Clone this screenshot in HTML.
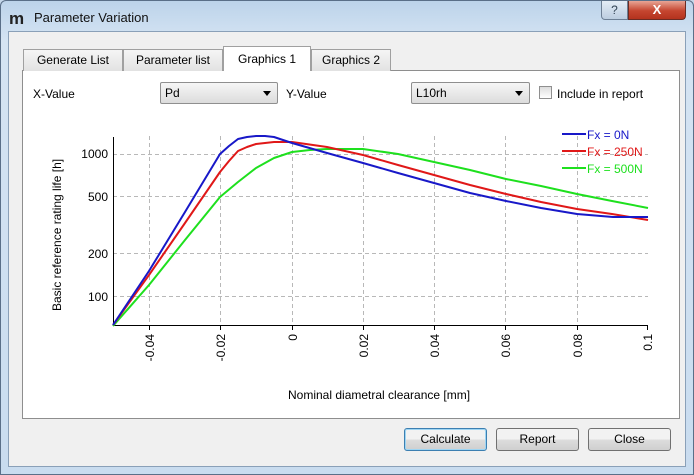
<!DOCTYPE html>
<html><head><style>
*{margin:0;padding:0;box-sizing:border-box}
body{width:694px;height:475px;overflow:hidden;font-family:"Liberation Sans",sans-serif;font-size:12px;color:#000;background:#c4d7ea}
.win{position:absolute;left:0;top:0;width:694px;height:475px;background:linear-gradient(#bcd3ea,#d5e4f3 40px,#c9dcef);border:1px solid #5a6f88;border-radius:6px 6px 0 0}
.title{position:absolute;left:33px;top:9px;font-size:13px;color:#111}
.logo{position:absolute;left:8px;top:8px;font-size:17px;font-weight:bold;color:#222;letter-spacing:-1px}
.help{position:absolute;left:600px;top:0;width:27px;height:19px;border:1px solid #6d7f95;border-top:none;border-radius:0 0 0 4px;background:linear-gradient(#e3ecf6,#bccde0);text-align:center;font-size:12px;color:#345;line-height:18px}
.close{position:absolute;left:627px;top:0;width:58px;height:19px;border:1px solid #6b2b23;border-top:none;border-radius:0 0 4px 0;background:linear-gradient(#e8a595,#c5452f 55%,#b4331e);text-align:center;color:#fff;font-weight:bold;line-height:18px;font-size:13px}
.inner{position:absolute;left:8px;top:31px;width:678px;height:436px;background:#f0f0f0;border:1px solid #8aa0b8}
.pane{position:absolute;left:22px;top:70px;width:658px;height:349px;background:#fff;border:1px solid #8e8e8e}
.tab{position:absolute;top:49px;height:22px;border:1px solid #a0a0a0;border-bottom:none;background:linear-gradient(#f5f5f5,#e2e2e2);text-align:center;line-height:21px;font-size:12px}
.tab.a{top:46px;height:25px;background:#fff;line-height:25px}
.lbl{position:absolute;top:87px;font-size:12px}
.combo{position:absolute;top:82px;height:22px;border:1px solid #8f8f8f;border-radius:2px;background:linear-gradient(#f6f6f6,#dcdcdc);padding-left:4px;line-height:20px;font-size:12px}
.combo:after{content:"";position:absolute;right:6px;top:8px;border-left:4px solid transparent;border-right:4px solid transparent;border-top:5px solid #000}
.chk{position:absolute;left:539px;top:86px;width:13px;height:13px;border:1px solid #8f8f8f;background:linear-gradient(#ddd,#fff)}
.btn{position:absolute;top:428px;width:83px;height:23px;border:1px solid #707070;border-radius:3px;background:linear-gradient(#f2f2f2 50%,#dddddd 50%,#cfcfcf);text-align:center;line-height:21px;font-size:12px}
.btn.d{border-color:#3c7fb1;box-shadow:inset 0 0 0 1px #9ed5f3}
</style></head><body>
<div class="win">
<div class="logo">m</div>
<div class="title">Parameter Variation</div>
<div class="help">?</div>
<div class="close">X</div>
</div>
<div class="inner"></div>
<div class="pane"></div>
<div class="tab" style="left:23px;width:100px">Generate List</div>
<div class="tab" style="left:123px;width:100px">Parameter list</div>
<div class="tab a" style="left:223px;width:88px">Graphics 1</div>
<div class="tab" style="left:311px;width:80px">Graphics 2</div>
<div class="lbl" style="left:33px">X-Value</div>
<div class="combo" style="left:160px;width:118px">Pd</div>
<div class="lbl" style="left:286px">Y-Value</div>
<div class="combo" style="left:411px;width:119px">L10rh</div>
<div class="chk"></div>
<div class="lbl" style="left:557px">Include in report</div>
<svg style="position:absolute;left:0;top:0" width="694" height="475" font-family="Liberation Sans, sans-serif" font-size="12">
<g stroke="#b8b8b8" stroke-dasharray="4,3" stroke-width="1">
<line x1="113" y1="154.5" x2="648" y2="154.5"/><line x1="113" y1="196.5" x2="648" y2="196.5"/><line x1="113" y1="253.5" x2="648" y2="253.5"/><line x1="113" y1="296.5" x2="648" y2="296.5"/>
<line x1="149.5" y1="136" x2="149.5" y2="325"/><line x1="220.5" y1="136" x2="220.5" y2="325"/><line x1="292.5" y1="136" x2="292.5" y2="325"/><line x1="363.5" y1="136" x2="363.5" y2="325"/><line x1="434.5" y1="136" x2="434.5" y2="325"/><line x1="505.5" y1="136" x2="505.5" y2="325"/><line x1="577.5" y1="136" x2="577.5" y2="325"/>
</g>
<g stroke="#000" stroke-width="1"><line x1="113.5" y1="137" x2="113.5" y2="326"/><line x1="113" y1="325.5" x2="648" y2="325.5"/>
<line x1="149.5" y1="325" x2="149.5" y2="330"/><line x1="220.5" y1="325" x2="220.5" y2="330"/><line x1="292.5" y1="325" x2="292.5" y2="330"/><line x1="363.5" y1="325" x2="363.5" y2="330"/><line x1="434.5" y1="325" x2="434.5" y2="330"/><line x1="505.5" y1="325" x2="505.5" y2="330"/><line x1="577.5" y1="325" x2="577.5" y2="330"/><line x1="647.5" y1="325" x2="647.5" y2="330"/></g>
<g text-anchor="end"><text x="108" y="158">1000</text><text x="108" y="201">500</text><text x="108" y="258">200</text><text x="108" y="301">100</text></g>
<g text-anchor="end">
<text transform="translate(154,334) rotate(-90)">-0.04</text><text transform="translate(225,334) rotate(-90)">-0.02</text><text transform="translate(297,334) rotate(-90)">0</text><text transform="translate(368,334) rotate(-90)">0.02</text><text transform="translate(439,334) rotate(-90)">0.04</text><text transform="translate(510,334) rotate(-90)">0.06</text><text transform="translate(582,334) rotate(-90)">0.08</text><text transform="translate(652,334) rotate(-90)">0.1</text></g>
<text transform="translate(61,311) rotate(-90)">Basic reference rating life [h]</text>
<text x="288" y="399">Nominal diametral clearance [mm]</text>
<g fill="none" stroke-width="2" stroke-linejoin="round">
<polyline stroke="#1ee01e" points="113,326 149,285 185,240 220,197 238,182 256,168 274,158 292,152 310,150 327,149 363,149 398,154 434,162 470,170 506,179 541,186 577,194 612,201 648,208"/>
<polyline stroke="#e01818" points="113,325 149,275 185,223 220,172 229,161 238,151 247,147 256,144 274,142 292,142 327,147 363,155 398,165 434,175 470,185 506,194 541,202 577,209 612,214 648,220"/>
<polyline stroke="#1818c8" points="113,325 149,271 185,212 220,154 229,146 238,139 247,137 256,136 265,136 274,137 283,140 292,143 327,153 363,163 398,173 434,183 470,193 506,201 541,208 577,214 613,217 648,217"/>
<line x1="562" y1="134" x2="586" y2="134" stroke="#1818c8" stroke-width="2"/>
<line x1="562" y1="151" x2="586" y2="151" stroke="#e01818" stroke-width="2"/>
<line x1="562" y1="168" x2="586" y2="168" stroke="#1ee01e" stroke-width="2"/>
</g>
<text x="587" y="139" fill="#1818c8">Fx = 0N</text>
<text x="587" y="156" fill="#e01818">Fx = 250N</text>
<text x="587" y="173" fill="#1ee01e">Fx = 500N</text>
</svg>
<div class="btn d" style="left:404px">Calculate</div>
<div class="btn" style="left:496px">Report</div>
<div class="btn" style="left:588px">Close</div>
</body></html>
